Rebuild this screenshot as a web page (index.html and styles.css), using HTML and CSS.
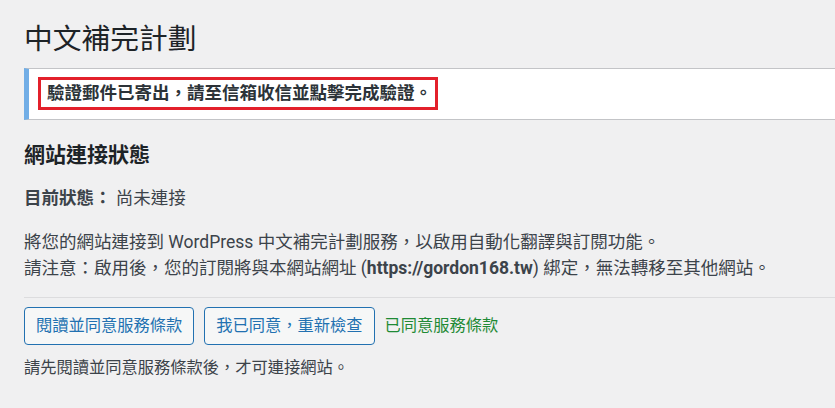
FILE: index.html
```html
<!DOCTYPE html>
<html lang="zh-Hant">
<head>
<meta charset="utf-8">
<title>中文補完計劃</title>
<link rel="stylesheet" href="styles.css">
</head>
<body>
<div class="wrap">
  <h1 class="page-title">中文補完計劃</h1>
  <div class="notice">
    <p class="notice-msg"><strong>驗證郵件已寄出，請至信箱收信並點擊完成驗證。</strong></p>
  </div>
  <h2 class="section-title">網站連接狀態</h2>
  <p class="status"><strong>目前狀態：</strong> 尚未連接</p>
  <p class="desc">將您的網站連接到 WordPress 中文補完計劃服務，以啟用自動化翻譯與訂閱功能。<br>請注意：啟用後，您的訂閱將與本網站網址 (<strong>https://gordon168.tw</strong>) 綁定，無法轉移至其他網站。</p>
  <hr class="divider">
  <div class="actions">
    <button class="button" type="button">閱讀並同意服務條款</button>
    <button class="button" type="button">我已同意，重新檢查</button>
    <span class="agreed">已同意服務條款</span>
  </div>
  <p class="hint">請先閱讀並同意服務條款後，才可連接網站。</p>
</div>
</body>
</html>
```

FILE: styles.css
```css
html, body {
  margin: 0;
  padding: 0;
  background: #f0f0f1;
}

body {
  font-family: "Roboto", "Noto Sans CJK TC", sans-serif;
  font-size: 16.25px;
  color: #3c434a;
  overflow: hidden;
}

.wrap {
  padding: 0 0 0 24px;
}

.page-title {
  margin: 0;
  padding: 21px 0 0 0;
  font-size: 28.75px;
  line-height: 37px;
  font-weight: 400;
  color: #1d2327;
}

.notice {
  margin-top: 10px;
  background: #fff;
  border-top: 1px solid #c3c4c7;
  border-bottom: 1px solid #c3c4c7;
  border-left: 5px solid #72aee6;
  padding: 8px 0 9px 9px;
}

.notice-msg {
  display: inline-block;
  margin: 0;
  border: 3px solid #e3202b;
  padding: 0 3px 0 6px;
  font-size: 17.5px;
  line-height: 27px;
  color: #2c3338;
}

.notice-msg strong {
  font-weight: 700;
}

.section-title {
  margin: 21px 0 0 0;
  font-size: 21px;
  line-height: 28px;
  font-weight: 700;
  color: #1d2327;
}

.status {
  margin: 16px 0 0 0;
  font-size: 17.5px;
  line-height: 26px;
}

.status strong {
  color: #3c434a;
}

.desc {
  margin: 19px 0 0 0;
  font-size: 17.5px;
  line-height: 25.5px;
}

.divider {
  margin: 16px 0 0 0;
  border: 0;
  border-top: 1px solid #dcdcde;
  height: 0;
}

.actions {
  margin-top: 9px;
  display: flex;
  align-items: center;
  gap: 10px;
}

.button {
  height: 38px;
  padding: 0 11px;
  font-family: inherit;
  font-size: 16.25px;
  line-height: 36px;
  color: #2271b1;
  background: #f6f7f7;
  border: 1px solid #2271b1;
  border-radius: 4px;
  cursor: pointer;
}

.agreed {
  color: #1f8a35;
  line-height: 38px;
}

.hint {
  margin: 10px 0 0 0;
  line-height: 25px;
}
```
